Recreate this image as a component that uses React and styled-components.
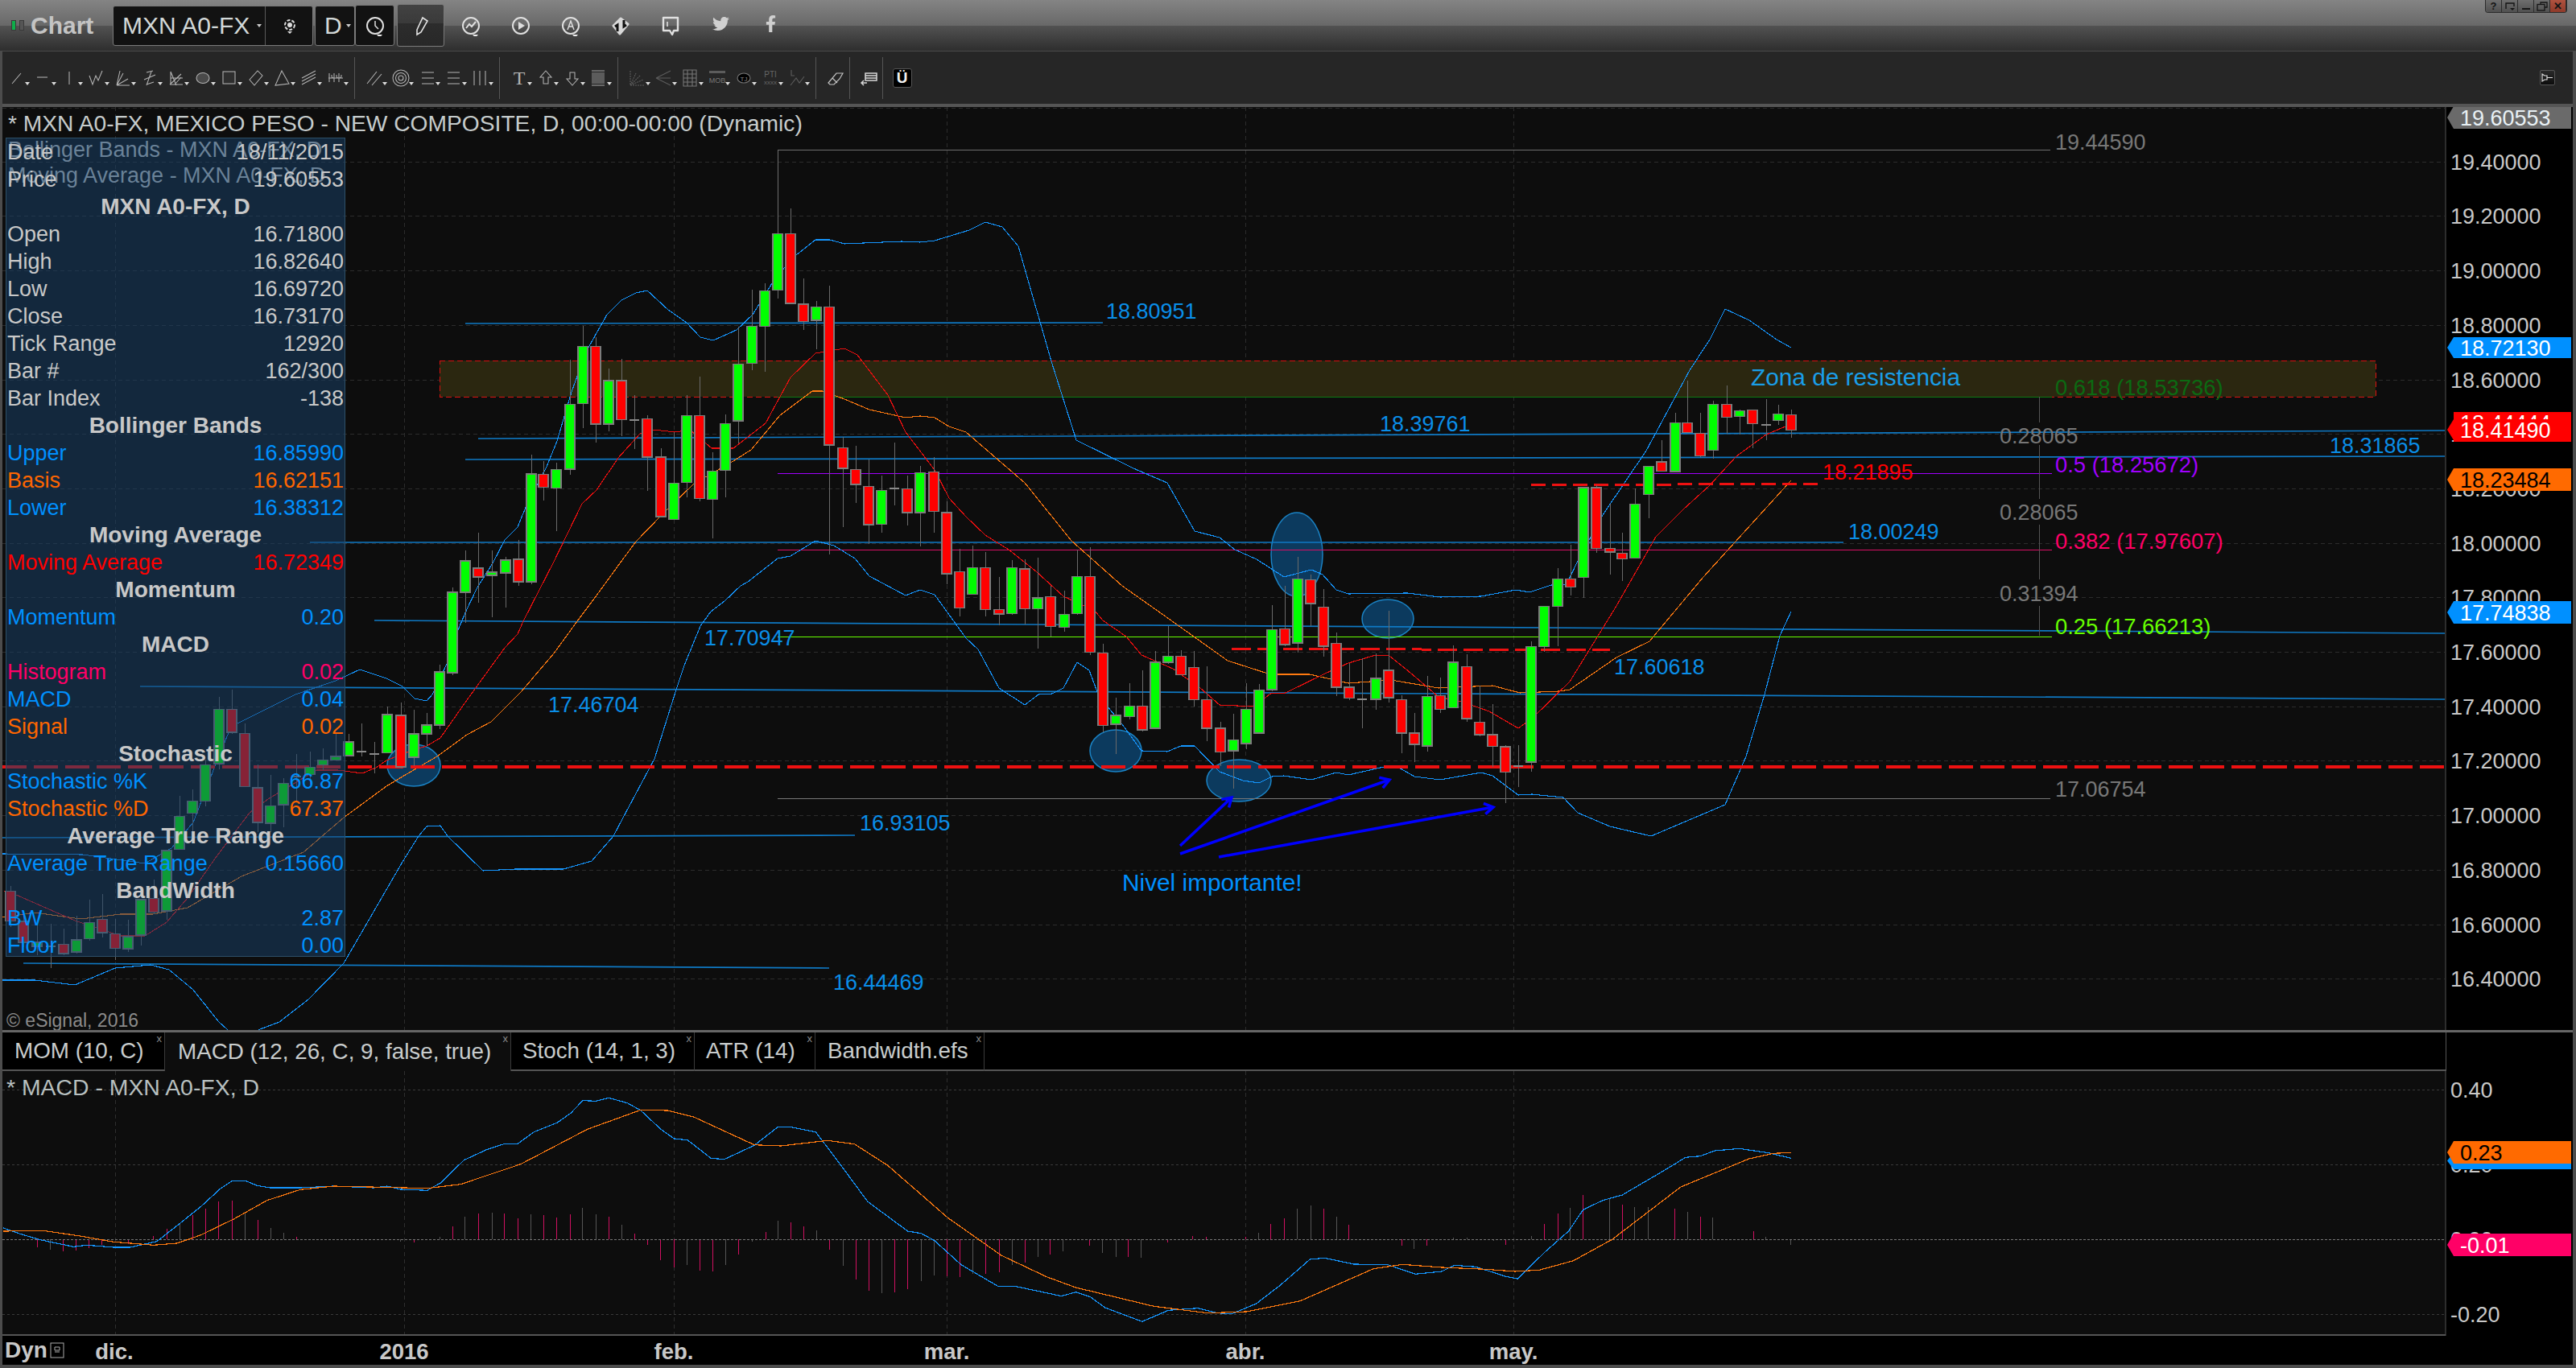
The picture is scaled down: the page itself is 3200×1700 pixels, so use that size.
import React from "react";
import styled, { createGlobalStyle } from "styled-components";
import { FaTwitter, FaFacebookF } from "react-icons/fa";

const FONT = `"Liberation Sans", Arial, sans-serif`;

const Global = createGlobalStyle`
  html, body { margin: 0; padding: 0; background: #000; }
  body { font-family: ${FONT}; }
`;

const Win = styled.div`
  width: 3200px;
  height: 1700px;
  overflow: hidden;
  display: flex;
  flex-direction: column;
  background: #4c4c4c;
  color: #c8c8c8;
`;

/* ---------- title bar ---------- */
const TitleBar = styled.div`
  height: 63px;
  flex: none;
  display: flex;
  align-items: center;
  position: relative;
  border-bottom: 1px solid #4a4a4a;
  background: linear-gradient(#848484 0, #686868 32px, #525252 32px, #2e2e2e 63px);
`;
const Led = styled.span`
  width: 6px;
  height: 13px;
  margin-left: ${(p) => p.$ml}px;
  background: ${(p) => p.$c};
  border: 1px solid #3a3a3a;
  box-sizing: border-box;
`;
const AppName = styled.span`
  margin-left: 8px;
  width: 102px;
  font-size: 30px;
  font-weight: bold;
  color: #c4c4c4;
`;
const FieldBox = styled.div`
  height: ${(p) => p.$h || 50}px;
  width: ${(p) => p.$w}px;
  margin-left: ${(p) => p.$ml || 0}px;
  box-sizing: border-box;
  display: flex;
  align-items: center;
  background: ${(p) => p.$bg || "#121212"};
  border: 1px solid #7a7a7a;
  border-radius: 3px;
  flex: none;
  position: relative;
`;
const FieldText = styled.span`
  font-size: 30px;
  color: #d2d8d8;
  margin-left: ${(p) => p.$ml}px;
`;
const TinyCaret = styled.span`
  position: absolute;
  left: ${(p) => p.$x}px;
  top: 22px;
  border-left: 3px solid transparent;
  border-right: 3px solid transparent;
  border-top: 4px solid #ccc;
`;
const FieldDivider = styled.span`
  position: absolute;
  left: 188px;
  top: 0;
  bottom: 0;
  border-left: 1px solid #5a5a5a;
`;
const FieldIcon = styled.span`
  position: absolute;
  left: ${(p) => p.$x}px;
  top: 50%;
  transform: translate(-50%, -50%);
  display: flex;
`;
const TitleIcons = styled.div`
  display: flex;
  margin-left: 2px;
`;
const TitleIconCell = styled.div`
  width: 62px;
  display: flex;
  justify-content: center;
  color: #d0d0d0;
  font-size: 21px;
`;
const WinButtons = styled.div`
  position: absolute;
  left: 3087px;
  top: 0;
  display: flex;
  height: 15px;
  border: 1px solid #2c2c2c;
  border-top: none;
  border-radius: 0 0 4px 4px;
  overflow: hidden;
`;
const WinBtn = styled.div`
  width: 20px;
  box-sizing: border-box;
  border-right: 1px solid #2c2c2c;
  background: ${(p) =>
    p.$close ? "linear-gradient(#b0523f,#8f3a2a)" : "linear-gradient(#6e6e6e,#505050)"};
  display: flex;
  align-items: center;
  justify-content: center;
  color: #151515;
  font-size: 13px;
  font-weight: bold;
  line-height: 1;
`;

/* ---------- body + drawing toolbar ---------- */
const Frame = styled.div`
  flex: 1;
  display: flex;
  flex-direction: column;
  padding: 0 4px 4px 3px;
  min-height: 0;
`;
const DrawBar = styled.div`
  height: 65px;
  flex: none;
  display: flex;
  align-items: center;
  background: #262626;
  overflow: hidden;
`;
const ToolGroup = styled.div`
  height: 52px;
  display: flex;
  align-items: center;
  padding: 0 ${(p) => (p.$tight ? 0 : 6.5)}px 0 7.5px;
  border-right: ${(p) => (p.$plain ? "none" : "1px solid #555")};
  &:first-child {
    margin-left: -6px;
  }
`;
const ToolCell = styled.div`
  width: 33px;
  height: 30px;
  position: relative;
  display: flex;
  align-items: center;
  justify-content: center;
  svg {
    display: block;
  }
`;
const Caret = styled.span`
  position: absolute;
  left: 26px;
  bottom: 6px;
  border-left: 3px solid transparent;
  border-right: 3px solid transparent;
  border-top: 4px solid #ddd;
`;
const MagnetBtn = styled.div`
  width: 24px;
  height: 24px;
  margin-left: 4px;
  background: #000;
  border: 1px solid #555;
  border-radius: 3px;
  box-sizing: border-box;
  display: flex;
  align-items: center;
  justify-content: center;
  color: #f0f0f0;
  font-weight: bold;
  font-size: 19px;
`;
const PinBtn = styled.div`
  width: 19px;
  height: 19px;
  margin-left: auto;
  margin-right: 22px;
  box-sizing: border-box;
  background: linear-gradient(#2a2a2a, #0c0c0c);
  border: 1px solid #555;
  border-radius: 2px;
  display: flex;
  align-items: center;
  justify-content: center;
`;
const Rule = styled.div`
  height: 4px;
  flex: none;
  background: #555;
`;

/* ---------- main chart ---------- */
const ChartArea = styled.div`
  position: relative;
  height: 1147px;
  flex: none;
  svg {
    display: block;
  }
  svg text {
    font-family: ${FONT};
  }
`;
const ChartTitle = styled.div`
  position: absolute;
  left: 7px;
  top: 4px;
  font-size: 28.2px;
  line-height: 32px;
  color: #c6cccc;
  white-space: nowrap;
`;
const DataPanel = styled.div`
  position: absolute;
  left: 4px;
  top: 38px;
  width: 422px;
  height: 1018px;
  box-sizing: border-box;
  border: 1px solid #2e5068;
  background: rgba(25, 64, 104, 0.525);
`;
const Legend = styled.div`
  position: absolute;
  left: 2px;
  top: ${(p) => p.$top}px;
  font-size: 27px;
  line-height: 28px;
  color: #6a8298;
  white-space: nowrap;
`;
const Row = styled.div`
  position: relative;
  height: 34px;
  padding: 0 1px 0 1px;
  display: flex;
  justify-content: ${(p) => (p.$head ? "center" : "space-between")};
  align-items: center;
  font-size: ${(p) => (p.$head ? 28 : 27)}px;
  font-weight: ${(p) => (p.$head ? "bold" : "normal")};
  color: ${(p) => p.$c || "#c8c8c8"};
  white-space: nowrap;
`;

/* ---------- tabs ---------- */
const TabStrip = styled.div`
  height: 48px;
  flex: none;
  display: flex;
  border-top: 3px solid #666;
  background: #000;
`;
const Tab = styled.div`
  width: ${(p) => p.$w}px;
  box-sizing: border-box;
  flex: none;
  position: relative;
  padding-left: ${(p) => p.$pl}px;
  display: flex;
  align-items: center;
  font-size: 27.8px;
  color: #c8cccc;
  white-space: nowrap;
  background: ${(p) => (p.$active ? "#0d0d0d" : "#000")};
  border-bottom: ${(p) => (p.$active ? "none" : "2px solid #555")};
  border-right: 1px solid #3a3a3a;
`;
const TabClose = styled.span`
  position: absolute;
  right: 3px;
  top: 1px;
  font-size: 13px;
  line-height: 14px;
  color: #888;
`;
const TabFill = styled.div`
  flex: 1;
  border-bottom: 2px solid #555;
`;
const TabAxis = styled.div`
  width: 157px;
  flex: none;
  border-left: 1px solid #555;
`;

/* ---------- bottom panes ---------- */
const MacdPane = styled.div`
  height: 329px;
  flex: none;
  svg {
    display: block;
  }
  svg text {
    font-family: ${FONT};
  }
`;
const TimeAxis = styled.div`
  height: 36px;
  flex: none;
  position: relative;
  background: #000;
`;
const TimeLabel = styled.span`
  position: absolute;
  left: ${(p) => p.$x - 3}px;
  top: 0;
  line-height: 40px;
  transform: translateX(-50%);
  font-size: 27.5px;
  font-weight: bold;
  color: #c8c8c8;
`;
const DynLabel = styled.div`
  display: flex;
  align-items: center;
  height: 100%;
  gap: 3px;
  padding-left: 3px;
  font-size: 28px;
  font-weight: bold;
  color: #c8c8c8;
`;

/* ---------- chart data, all in page pixels ---------- */
const place = (rows, y0, k) =>
  rows.map(([x, c, a, b, e, d]) => [x, c, y0 + a / k, y0 + b / k, y0 + e / k, y0 + d / k]);

const BARS = [
  ...place(
    [
      [13, "r", 1155, 1170, 1260, 1280], [29, "r", 1240, 1262, 1325, 1340], [46, "g", 1270, 1325, 1338, 1365],
      [63, "d", 1270, 1338, 1338, 1405], [79, "r", 1285, 1332, 1360, 1365], [95, "g", 1245, 1318, 1355, 1360],
      [111, "g", 1195, 1266, 1314, 1320], [127, "r", 1178, 1256, 1296, 1310], [143, "r", 1255, 1300, 1344, 1380],
      [159, "g", 1258, 1308, 1345, 1355], [175, "g", 1195, 1195, 1304, 1335], [191, "r", 1135, 1192, 1233, 1240],
      [207, "g", 1046, 1046, 1230, 1256], [223, "g", 880, 942, 1042, 1042], [239, "g", 860, 896, 932, 990],
      [255, "g", 770, 785, 895, 912], [272, "g", 578, 616, 782, 798], [288, "r", 556, 616, 686, 690],
      [304, "r", 660, 690, 851, 851], [320, "r", 783, 855, 960, 990], [336, "g", 815, 910, 963, 990],
      [352, "g", 825, 842, 907, 975], [368, "d", 752, 820, 820, 895], [385, "g", 745, 793, 815, 845],
      [401, "g", 735, 770, 785, 800], [417, "g", 690, 760, 770, 770], [433, "g", 690, 715, 757, 760],
      [449, "d", 660, 745, 745, 760], [465, "d", 715, 752, 752, 810], [481, "g", 608, 632, 748, 748],
    ],
    630,
    2.45
  ),
  [498, "r", 873, 889, 953, 955], [514, "g", 882, 912, 941, 952], [530, "g", 886, 901, 912, 927],
  [546, "g", 826, 835, 901, 906], [562, "g", 730, 736, 836, 839], [578, "g", 684, 697, 736, 774],
  [594, "r", 662, 706, 717, 749], [611, "g", 684, 711, 715, 767], [628, "g", 692, 696, 712, 755],
  [644, "r", 671, 695, 723, 728], [660, "g", 565, 589, 723, 726],
  ...place(
    [
      [675, "r", 1100, 1146, 1191, 1237], [691, "g", 1105, 1130, 1194, 1345], [708, "g", 748, 903, 1129, 1147],
      [724, "g", 630, 701, 900, 985], [740, "r", 670, 701, 972, 1037], [756, "g", 778, 821, 972, 997],
      [772, "r", 745, 821, 956, 1013], [788, "d", 870, 957, 957, 1057], [804, "r", 940, 953, 1087, 1203],
      [821, "r", 1055, 1087, 1294, 1295], [837, "g", 1000, 1178, 1303, 1304], [853, "g", 870, 942, 1174, 1225],
      [869, "r", 805, 942, 1230, 1240], [885, "g", 1070, 1135, 1233, 1368], [901, "g", 938, 970, 1132, 1225],
      [917, "g", 632, 763, 961, 1040], [934, "g", 503, 631, 760, 785], [950, "g", 482, 508, 631, 790],
      [966, "g", 310, 310, 505, 535], [982, "r", 220, 310, 552, 552], [998, "r", 465, 555, 614, 643],
      [1014, "g", 543, 564, 611, 710], [1030, "r", 490, 564, 1045, 1424], [1047, "r", 1015, 1054, 1126, 1330],
      [1063, "r", 1047, 1130, 1182, 1245], [1079, "r", 1095, 1188, 1322, 1390], [1095, "g", 1150, 1202, 1320, 1350],
      [1111, "d", 1037, 1195, 1195, 1253], [1127, "r", 1150, 1197, 1280, 1323], [1143, "g", 1118, 1141, 1280, 1398],
      [1160, "r", 1087, 1138, 1275, 1350], [1176, "r", 1240, 1279, 1493, 1530], [1192, "r", 1405, 1486, 1612, 1640],
    ],
    180,
    2.8
  ),
  ...place(
    [
      [1208, "g", 225, 306, 402, 402], [1224, "r", 250, 306, 457, 480], [1241, "r", 340, 457, 473, 512],
      [1257, "g", 277, 306, 471, 475], [1273, "r", 275, 310, 454, 510], [1289, "g", 270, 414, 454, 597],
      [1305, "r", 370, 410, 518, 555], [1322, "g", 390, 474, 521, 537], [1338, "g", 240, 338, 471, 475],
      [1354, "r", 232, 338, 611, 622], [1370, "r", 581, 614, 875, 900], [1386, "g", 775, 838, 870, 978],
      [1403, "g", 723, 805, 843, 852], [1419, "r", 677, 805, 890, 895], [1435, "g", 607, 646, 885, 885],
      [1451, "g", 517, 625, 647, 652], [1467, "r", 602, 625, 692, 692], [1483, "r", 607, 666, 782, 805],
      [1499, "r", 662, 782, 885, 930], [1516, "r", 862, 884, 970, 1020], [1532, "g", 833, 927, 965, 1103],
      [1548, "g", 723, 817, 940, 960], [1564, "g", 725, 747, 902, 905], [1580, "g", 441, 529, 745, 750],
      [1596, "r", 370, 526, 583, 590], [1612, "g", 267, 347, 577, 612], [1628, "r", 330, 350, 435, 515],
      [1644, "r", 383, 448, 588, 625], [1660, "r", 540, 579, 737, 768], [1676, "r", 650, 737, 776, 783],
      [1692, "d", 632, 780, 780, 885], [1709, "g", 615, 704, 780, 818], [1725, "r", 460, 675, 774, 792],
      [1741, "r", 765, 782, 902, 975], [1757, "r", 830, 902, 942, 1005], [1773, "g", 695, 770, 948, 970],
      [1789, "r", 703, 767, 817, 828], [1805, "g", 587, 646, 811, 811], [1822, "r", 618, 663, 850, 862],
      [1838, "r", 730, 863, 907, 913], [1854, "r", 798, 907, 950, 1025], [1870, "r", 945, 951, 1043, 1153],
      [1886, "d", 945, 1022, 1022, 1095], [1902, "g", 572, 590, 1006, 1040],
    ],
    600,
    2.9
  ),
  ...place(
    [
      [1918, "g", 1000, 1000, 1150, 1170], [1935, "g", 858, 898, 1000, 1150], [1951, "r", 770, 898, 928, 960],
      [1967, "g", 600, 558, 892, 970], [1983, "r", 550, 558, 785, 800], [2000, "r", 618, 785, 798, 882],
      [2015, "r", 725, 802, 823, 905], [2031, "g", 560, 619, 820, 820], [2048, "g", 478, 478, 583, 673],
      [2064, "r", 380, 462, 497, 497], [2081, "g", 278, 316, 498, 498], [2096, "r", 160, 316, 352, 352],
      [2112, "r", 280, 355, 440, 445], [2128, "g", 235, 247, 418, 450], [2145, "r", 178, 247, 295, 358],
      [2161, "g", 268, 272, 293, 360], [2177, "r", 268, 268, 320, 410], [2194, "d", 228, 323, 323, 380],
      [2209, "g", 250, 283, 307, 325], [2225, "r", 268, 286, 343, 372],
    ],
    420,
    3
  ),
];

const UPPER = [
  [3, 1061], [103, 1062], [180, 1073], [213, 1054], [240, 1022], [267, 952], [287, 903], [303, 895], [367, 863],
  [417, 846], [447, 832], [480, 843], [500, 853], [515, 868], [530, 871], [537, 863], [555, 825], [568, 785],
  [580, 757], [593, 730], [612, 700], [627, 671], [643, 655], [654, 628], [679, 580], [692, 548], [710, 487],
  [728, 437], [754, 391], [772, 373], [790, 364], [804, 361], [830, 385], [853, 401], [870, 419], [886, 423],
  [915, 410], [935, 391], [964, 344], [989, 317], [1013, 298], [1031, 298], [1049, 303], [1120, 300], [1143, 301],
  [1161, 299], [1204, 286], [1224, 276], [1245, 282], [1265, 306], [1306, 449], [1337, 547], [1408, 582], [1450, 600],
  [1484, 660], [1515, 668], [1534, 683], [1561, 695], [1595, 717], [1629, 708], [1643, 714], [1660, 733], [1675, 738],
  [1748, 737], [1789, 742], [1840, 741], [1883, 733], [1900, 736], [1927, 727], [1946, 726], [1960, 697], [1991, 640],
  [2045, 560], [2099, 460], [2124, 422], [2143, 384], [2173, 398], [2207, 422], [2225, 432],
];
const LOWER = [
  [3, 1218], [43, 1218], [93, 1224], [143, 1203], [187, 1199], [210, 1205], [240, 1230], [272, 1270], [300, 1295],
  [323, 1279], [347, 1270], [383, 1242], [427, 1197], [467, 1128], [500, 1071], [520, 1039], [530, 1027], [547, 1026],
  [556, 1039], [600, 1082], [640, 1080], [700, 1080], [735, 1070], [762, 1039], [773, 1018], [813, 943], [840, 857],
  [850, 827], [870, 778], [883, 760], [900, 747], [920, 728], [929, 723], [966, 694], [982, 691], [1013, 672],
  [1036, 678], [1062, 694], [1080, 716], [1125, 740], [1143, 733], [1161, 739], [1200, 793], [1215, 807], [1241, 855],
  [1273, 876], [1290, 863], [1307, 862], [1321, 855], [1338, 823], [1353, 833], [1365, 865], [1394, 900], [1418, 933],
  [1450, 934], [1467, 927], [1484, 927], [1515, 959], [1544, 970], [1564, 973], [1580, 965], [1595, 964], [1629, 969],
  [1660, 960], [1675, 963], [1719, 953], [1738, 954], [1757, 965], [1789, 969], [1840, 960], [1854, 964], [1886, 988],
  [1903, 987], [1942, 991], [1960, 1010], [2000, 1027], [2051, 1039], [2143, 1000], [2169, 940], [2192, 863], [2211, 790],
  [2225, 760],
];
const MA = [
  [5, 1107], [20, 1112], [93, 1144], [150, 1163], [180, 1163], [207, 1146], [233, 1116], [267, 1067], [310, 1010],
  [333, 993], [393, 957], [420, 957], [450, 961], [467, 954], [480, 945], [513, 932], [530, 927], [547, 917], [580, 870],
  [627, 805], [643, 788], [650, 772], [687, 700], [723, 626], [741, 609], [768, 569], [795, 539], [812, 534], [839, 537],
  [857, 534], [884, 557], [911, 557], [951, 526], [982, 469], [1013, 439], [1049, 433], [1065, 441], [1103, 491],
  [1125, 537], [1161, 584], [1179, 619], [1200, 642], [1224, 665], [1253, 683], [1287, 710], [1321, 741], [1360, 759],
  [1370, 771], [1399, 791], [1418, 814], [1457, 831], [1491, 855], [1515, 876], [1559, 878], [1578, 862], [1597, 861],
  [1646, 837], [1675, 824], [1709, 814], [1726, 815], [1752, 836], [1787, 866], [1816, 872], [1850, 884], [1886, 905],
  [1903, 893], [1950, 847], [2008, 753], [2057, 667], [2091, 633], [2124, 603], [2157, 567], [2194, 540], [2225, 527],
];
const BASIS = [
  [3, 1140], [43, 1134], [100, 1142], [150, 1136], [190, 1136], [233, 1128], [300, 1089], [377, 1059], [427, 1016],
  [480, 977], [500, 965], [543, 940], [580, 913], [610, 897], [647, 860], [688, 812], [717, 772], [741, 740], [770, 700],
  [790, 673], [821, 641], [862, 601], [906, 576], [933, 559], [969, 516], [1009, 486], [1022, 486], [1049, 496],
  [1080, 509], [1125, 519], [1143, 517], [1161, 519], [1179, 530], [1200, 537], [1273, 600], [1331, 672], [1394, 728],
  [1452, 769], [1525, 821], [1578, 838], [1627, 838], [1675, 849], [1728, 845], [1787, 855], [1854, 852], [1888, 861],
  [1937, 859], [1950, 857], [2008, 817], [2049, 797], [2116, 717], [2165, 663], [2225, 597],
];

const zoomed = (rows, x0, kx, y0, ky) => rows.map(([x, y]) => [x0 + x / kx, y0 + y / ky]);
const MACD_LINE = [
  ...zoomed(
    [
      [5, 858], [30, 880], [60, 902], [110, 928], [130, 922], [170, 930], [195, 930], [235, 908], [270, 840], [300, 780],
      [330, 712], [348, 682], [368, 682], [385, 700], [405, 708], [450, 708], [500, 702], [560, 708], [580, 702], [600, 714],
      [640, 718], [660, 690], [695, 605], [730, 565], [755, 545], [775, 545], [800, 500], [835, 465], [855, 430], [873, 383],
      [893, 385], [912, 373], [940, 392], [960, 420], [990, 490], [1010, 525], [1030, 530], [1065, 598], [1085, 602],
      [1130, 550], [1165, 482], [1185, 482], [1222, 500], [1260, 625], [1300, 760], [1360, 870], [1380, 878], [1400, 905],
      [1440, 995], [1495, 1075], [1520, 1075], [1568, 1100],
    ],
    0, 1.206, 1240, 3
  ),
  ...zoomed(
    [
      [15, 1112], [30, 1097], [45, 1115], [60, 1155], [98, 1207], [125, 1165], [155, 1157], [175, 1175], [190, 1178],
      [215, 1140], [240, 1070], [270, 975], [285, 970], [315, 993], [350, 995], [378, 1030], [405, 1020], [418, 997],
      [440, 1003], [470, 1038], [483, 1048], [510, 950], [535, 870], [550, 790], [570, 755], [590, 735], [630, 650],
      [655, 595], [670, 590], [685, 570], [710, 562], [740, 578], [763, 598],
    ],
    1300, 0.825, 1240, 3
  ),
];
const MACD_SIGNAL = [
  ...zoomed(
    [
      [5, 870], [65, 868], [120, 888], [170, 910], [230, 922], [265, 915], [300, 885], [350, 825], [400, 755], [450, 715],
      [500, 702], [570, 706], [640, 710], [690, 695], [780, 620], [880, 490], [960, 418], [1000, 420], [1040, 445],
      [1130, 548], [1170, 552], [1240, 532], [1280, 545], [1330, 625], [1420, 820], [1500, 960], [1568, 1040],
    ],
    0, 1.206, 1240, 3
  ),
  ...zoomed(
    [
      [30, 1080], [110, 1150], [165, 1175], [205, 1170], [260, 1130], [335, 1010], [365, 994], [405, 1005], [450, 1012],
      [480, 1020], [505, 1015], [540, 980], [580, 900], [650, 705], [720, 600], [745, 580], [763, 577],
    ],
    1300, 0.825, 1240, 3
  ),
];
// [x, bar end], "g" marks the bars that were painted grey
const HIST = [
  ...[
    [56, 930], [75, 938, "g"], [95, 945], [114, 942], [133, 932], [152, 922], [192, 918], [230, 888], [250, 860],
    [270, 840, "g"], [289, 810], [308, 785], [328, 758], [348, 755], [367, 800, "g"], [387, 827], [406, 858, "g"],
    [425, 876, "g"], [445, 892], [600, 910, "g"], [620, 912], [659, 890, "g"], [678, 852], [697, 815, "g"], [717, 803],
    [737, 800, "g"], [756, 803], [776, 822], [795, 807, "g"], [815, 810], [834, 818], [854, 807], [873, 783, "g"],
    [893, 807, "g"], [912, 815], [932, 845, "g"], [951, 878], [970, 920], [990, 978], [1010, 1004], [1029, 995, "g"],
    [1049, 1017], [1068, 1020], [1087, 995, "g"], [1107, 957], [1127, 910, "g"], [1147, 873], [1165, 830, "g"], [1185, 837],
    [1204, 852], [1223, 866, "g"], [1243, 938], [1263, 998, "g"], [1283, 1050], [1302, 1092], [1321, 1100, "g"], [1341, 1097],
    [1360, 1085], [1380, 1055, "g"], [1399, 1035, "g"], [1419, 1038], [1438, 1042], [1458, 1030, "g"], [1477, 1030],
    [1497, 1022], [1516, 995, "g"], [1536, 987], [1555, 965, "g"],
  ].map(([x, y, g]) => [x / 1.206, y, g]),
  ...[
    [4, 958], [17, 945, "g"], [44, 923], [57, 950, "g"], [71, 965, "g"], [84, 965], [97, 968, "g"], [124, 912], [150, 888],
    [164, 892], [204, 892], [217, 877, "g"], [230, 843], [244, 822], [257, 786, "g"], [271, 773, "g"], [284, 786],
    [297, 815, "g"], [310, 846], [364, 923], [377, 935, "g"], [390, 923], [417, 893, "g"], [431, 895, "g"], [458, 907, "g"],
    [471, 920], [497, 887, "g"], [510, 843], [524, 805], [537, 783, "g"], [550, 735], [577, 750, "g"], [590, 770],
    [603, 780, "g"], [617, 780, "g"], [644, 785], [657, 798, "g"], [670, 816], [683, 818, "g"], [725, 870], [737, 892, "g"],
    [763, 920, "g"],
  ].map(([x, y, g]) => [1300 + x / 0.825, y, g]),
];

const PANEL = [
  ["Date", "18/11/2015"],
  ["Price", "19.60553"],
  ["MXN A0-FX, D"],
  ["Open", "16.71800"],
  ["High", "16.82640"],
  ["Low", "16.69720"],
  ["Close", "16.73170"],
  ["Tick Range", "12920"],
  ["Bar #", "162/300"],
  ["Bar Index", "-138"],
  ["Bollinger Bands"],
  ["Upper", "16.85990", "#0090ff"],
  ["Basis", "16.62151", "#ff6600"],
  ["Lower", "16.38312", "#0090ff"],
  ["Moving Average"],
  ["Moving Average", "16.72349", "#ff0000"],
  ["Momentum"],
  ["Momentum", "0.20", "#0090ff"],
  ["MACD"],
  ["Histogram", "0.02", "#ff0066"],
  ["MACD", "0.04", "#0090ff"],
  ["Signal", "0.02", "#ff6600"],
  ["Stochastic"],
  ["Stochastic %K", "66.87", "#0090ff"],
  ["Stochastic %D", "67.37", "#ff6600"],
  ["Average True Range"],
  ["Average True Range", "0.15660", "#0090ff"],
  ["BandWidth"],
  ["BW", "2.87", "#0090ff"],
  ["Floor", "0.00", "#0090ff"],
];

const MONTHS = [
  ["dic.", 142],
  ["2016", 502],
  ["feb.", 837],
  ["mar.", 1176],
  ["abr.", 1547],
  ["may.", 1880],
];

const TRENDS = [
  [578, 402, 1370, 401],
  [594, 545, 3037, 535],
  [578, 571, 3037, 567],
  [385, 674, 2290, 674],
  [465, 771, 3037, 787],
  [174, 853, 3037, 869],
  [3, 1041, 1062, 1038],
  [29, 1197, 1030, 1203],
];

const CHART_LABELS = [
  ["19.44590", 2553, 176, "#777"],
  ["18.80951", 1374, 386, "#0a8ee8"],
  ["Zona de resistencia", 2175, 469, "#1a9ee8", 29.8],
  ["18.39761", 1714, 526, "#0a8ee8"],
  ["18.31865", 2894, 553, "#0a8ee8"],
  ["18.21895", 2264, 586, "#ff0000"],
  ["18.00249", 2296, 660, "#0a8ee8"],
  ["17.70947", 875, 792, "#0a8ee8"],
  ["17.60618", 2005, 828, "#0a8ee8"],
  ["17.46704", 681, 875, "#0a8ee8"],
  ["17.06754", 2553, 980, "#777"],
  ["16.93105", 1068, 1022, "#0a8ee8"],
  ["Nivel importante!", 1394, 1097, "#0090ff", 29.8],
  ["16.44469", 1035, 1220, "#0a8ee8"],
  ["© eSignal, 2016", 8, 1266, "#8a8a8a", 23],
  ["0.618 (18.53736)", 2553, 481, "#0b6a12", 27.4],
  ["0.5 (18.25672)", 2553, 577, "#a000ff", 27.4],
  ["0.382 (17.97607)", 2553, 672, "#ff0066", 27.4],
  ["0.25 (17.66213)", 2553, 778, "#66ff00", 27.4],
  ["0.28065", 2484, 541, "#777"],
  ["0.28065", 2484, 636, "#777"],
  ["0.31394", 2484, 737, "#777"],
];

const FIB_LINES = [
  [966, 186, 2547, 186, "#6e6e6e"],
  [966, 186, 966, 290, "#6e6e6e"],
  [966, 992, 2547, 992, "#777"],
  [966, 493, 2549, 493, "#0b7a12"],
  [966, 588, 2549, 588, "#a000ff"],
  [966, 683, 2549, 683, "#d80f64"],
  [966, 791, 2549, 791, "#66ff00"],
  [2533, 493, 2533, 525, "#555"],
  [2533, 553, 2533, 620, "#555"],
  [2533, 652, 2533, 720, "#555"],
  [2533, 753, 2533, 790, "#555"],
];

const ELLIPSES = [
  [1611, 689, 32, 52],
  [1724, 769, 32, 24],
  [1386, 933, 32, 26],
  [1539, 970, 40, 26],
  [514, 951, 33, 26],
];

const ARROWS = [
  [1466, 1051, 1530, 991],
  [1466, 1061, 1726, 969],
  [1514, 1065, 1855, 1003],
];

const AXIS_MAIN = ["19.40000", "19.20000", "19.00000", "18.80000", "18.60000", "18.40000", "18.20000", "18.00000", "17.80000", "17.60000", "17.40000", "17.20000", "17.00000", "16.80000", "16.60000", "16.40000"];
const priceY = (p) => 472 + (18.6 - p) * 338.5;
const GRID_V = [143, 502, 837, 1176, 1547, 1880];

const pts = (a) => a.map(([x, y]) => `${x.toFixed(1)},${y.toFixed(1)}`).join(" ");

function Tag({ y1, y2, fill, label, color = "#fff", x = 3056, size = 27 }) {
  const mid = (y1 + y2) / 2;
  return (
    <g>
      <polygon points={`3040,${mid} 3048,${y1} 3194,${y1} 3194,${y2} 3048,${y2}`} fill={fill} />
      <text x={x} y={mid + 9.5} fontSize={size} fill={color}>
        {label}
      </text>
    </g>
  );
}

function Candle({ x, c, top, open, close, bottom }) {
  const fill = c === "g" ? "#00ff00" : "#ff0000";
  return (
    <g shapeRendering="crispEdges">
      <line x1={x} x2={x} y1={top} y2={bottom} stroke="#6a6a6a" strokeWidth="1" />
      {c === "d" ? (
        <rect x={x - 6} y={open - 1} width="12" height="2" fill="#8a8a8a" />
      ) : (
        <rect x={x - 6} y={open} width="12" height={Math.max(close - open, 2)} fill={fill} stroke="#7c7c7c" strokeWidth="1.5" />
      )}
    </g>
  );
}

function MainChart() {
  return (
    <svg width="3193" height="1147" viewBox="3 133 3193 1147">
      <rect x="3" y="133" width="3035" height="1147" fill="#0d0d0d" />
      <rect x="3038" y="133" width="158" height="1147" fill="#000" />
      <g stroke="#2c2c2c" strokeWidth="1" strokeDasharray="5 4" shapeRendering="crispEdges">
        <line x1="3" x2="3037" y1="134" y2="134" />
        {AXIS_MAIN.map((p) => (
          <line key={p} x1="3" x2="3037" y1={priceY(+p)} y2={priceY(+p)} />
        ))}
        {GRID_V.map((x) => (
          <line key={x} x1={x} x2={x} y1="133" y2="1280" />
        ))}
      </g>
      <line x1="3038" x2="3038" y1="133" y2="1280" stroke="#555" />

      <rect x="546" y="448" width="2405" height="45" fill="#2b2710" stroke="#d81010" strokeDasharray="7 4" strokeWidth="1" shapeRendering="crispEdges" />

      {ELLIPSES.map(([cx, cy, rx, ry]) => (
        <ellipse key={cx} cx={cx} cy={cy} rx={rx} ry={ry} fill="#0c3a5e" stroke="#1a82c4" strokeWidth="1.5" />
      ))}

      {TRENDS.map(([a, b, c, d]) => (
        <line key={a + "-" + b} x1={a} y1={b} x2={c} y2={d} stroke="#0f79c4" strokeWidth="1.7" />
      ))}
      {FIB_LINES.map(([a, b, c, d, s], i) => (
        <line key={i} x1={a} y1={b} x2={c} y2={d} stroke={s} strokeWidth="1" shapeRendering="crispEdges" />
      ))}

      <g fill="none" strokeWidth="1.1" shapeRendering="crispEdges">
        <polyline points={pts(BASIS)} stroke="#ff7a10" />
        <polyline points={pts(MA)} stroke="#ee0f0f" />
        <polyline points={pts(UPPER)} stroke="#1596ff" />
        <polyline points={pts(LOWER)} stroke="#1596ff" />
      </g>

      <g stroke="#ee1111" fill="none" shapeRendering="crispEdges">
        <line x1="3" x2="3038" y1="953" y2="953" strokeWidth="3.5" strokeDasharray="30 9" />
        <line x1="1902" x2="2258" y1="603" y2="601" strokeWidth="3" strokeDasharray="18 8" />
        <line x1="1530" x2="2000" y1="806" y2="808" strokeWidth="3" strokeDasharray="24 8" />
      </g>

      {BARS.map(([x, c, t, o, e, b]) => (
        <Candle key={x} x={x} c={c} top={t} open={o} close={e} bottom={b} />
      ))}

      {ARROWS.map(([a, b, c, d]) => {
        const ang = Math.atan2(d - b, c - a);
        const hx = (s) => c - 13 * Math.cos(ang + s * 0.55);
        const hy = (s) => d - 13 * Math.sin(ang + s * 0.55);
        return (
          <g key={c} stroke="#0000ff" strokeWidth="3.5" fill="none">
            <line x1={a} y1={b} x2={c} y2={d} />
            <polyline points={`${hx(1)},${hy(1)} ${c},${d} ${hx(-1)},${hy(-1)}`} />
          </g>
        );
      })}

      {CHART_LABELS.map(([t, x, y, c, size]) => (
        <text key={t + x + y} x={x} y={y + 9.5} fontSize={size || 27} fill={c}>
          {t}
        </text>
      ))}

      {AXIS_MAIN.map((p) => (
        <text key={p} x="3044" y={priceY(+p) + 9.5} fontSize="27" fill="#c8c8c8">
          {p}
        </text>
      ))}
      <Tag y1={132} y2={160} fill="#6a6a6a" label="19.60553" color="#e8f0f4" />
      <Tag y1={419} y2={445} fill="#0090ff" label="18.72130" />
      <rect x="3048" y="512" width="146" height="37" fill="#ff0000" />
      <text x="3056" y="535" fontSize="27" fill="#fff">18.44444</text>
      <Tag y1={521} y2={547} fill="#ff0000" label="18.41490" />
      <Tag y1={582} y2={610} fill="#ff6a00" label="18.23484" color="#000" />
      <Tag y1={747} y2={775} fill="#0090ff" label="17.74838" />
    </svg>
  );
}

function MacdChart() {
  const zero = 1540;
  const gy = (z) => 1240 + z / 3;
  return (
    <svg width="3193" height="329" viewBox="3 1331 3193 329">
      <rect x="3" y="1331" width="3035" height="329" fill="#0d0d0d" />
      <rect x="3038" y="1331" width="158" height="329" fill="#000" />
      <g stroke="#2e2e2e" strokeDasharray="5 4" shapeRendering="crispEdges">
        {GRID_V.map((x) => (
          <line key={x} x1={x} x2={x} y1="1331" y2="1660" />
        ))}
      </g>
      <g stroke="#3a3a3a" strokeDasharray="3 3" shapeRendering="crispEdges">
        {[1354, 1447, 1633].map((y) => (
          <line key={y} x1="3" x2="3037" y1={y} y2={y} />
        ))}
      </g>
      <g strokeWidth="1" shapeRendering="crispEdges">
        {HIST.map(([x, z, g]) => (
          <line key={x} x1={x} x2={x} y1={zero} y2={gy(z)} stroke={g ? "#555" : "#d01060"} />
        ))}
      </g>
      <line x1="3" x2="3037" y1={zero} y2={zero} stroke="#777" strokeDasharray="3 2" shapeRendering="crispEdges" />
      <g fill="none" strokeWidth="1.2" shapeRendering="crispEdges">
        <polyline points={pts(MACD_LINE)} stroke="#1596ff" />
        <polyline points={pts(MACD_SIGNAL)} stroke="#ff7a10" />
      </g>
      <line x1="3" x2="3038" y1="1659" y2="1659" stroke="#555" strokeWidth="2" />
      <line x1="3038" x2="3038" y1="1331" y2="1660" stroke="#555" />
      <text x="8" y="1361" fontSize="28.4" fill="#b8c0c0">* MACD - MXN A0-FX, D</text>
      {[["0.40", 1354], ["0.20", 1447], ["0.00", 1540], ["-0.20", 1633]].map(([t, y]) => (
        <text key={t} x="3044" y={y + 9.5} fontSize="27" fill="#c8c8c8">
          {t}
        </text>
      ))}
      <Tag y1={1432} y2={1453} fill="#0090ff" label="" />
      <Tag y1={1418} y2={1446} fill="#ff6a00" label="0.23" color="#000" />
      <Tag y1={1533} y2={1561} fill="#ff0066" label="-0.01" />
    </svg>
  );
}

/* ---------- toolbar glyphs ---------- */
const TOOLS_A = [
  "M6 19L17 6",
  "M4 11H17",
  "M11 4V20",
  "M3 9L7 20L11 9L14 15L19 3",
  "M4 21L8 3M4 21L12 6M4 21L18 13M4 21H20",
  "M8 5L16 3M5 14L19 8M8 21L14 4M8 20L17 17",
  "M5 4L12 21M5 4V20M4 20H20M4 20L18 7M5 12L20 12M10 20L18 11",
  "ell",
  "rect",
  "M4 14L14 3L20 9L10 21Z",
  "M11 3L20 19L3 21Z",
  "M3 12L20 3M3 16L20 7M3 20L20 11",
  "M3 12H21M4 6V17M10 6V17M16 6V17M7 8C7 11 7 12 10 12M13 8C13 11 13 12 16 12M19 8C19 11 19 12 16 12",
];
const TOOLS_B = [
  "M3 19L15 4M9 21L21 7",
  "rings",
  "M5 5H20M5 12H20M5 19H20",
  "M4 5H19M4 12H19M4 19H19",
  "M4 3V21M11 3V21M18 3V21",
];
const TOOLS_C = ["serifT", "M12 3L19 11H15V19H9V11H5Z", "M12 21L19 13H15V5H9V13H5Z", "band"];

function ToolGlyph({ d, dim }) {
  const s = dim ? "#636363" : "#b4b4b4";
  return (
    <svg width="24" height="24" viewBox="0 0 24 24" fill="none" stroke={s} strokeWidth="1.05">
      {d === "ell" && <ellipse cx="12" cy="12" rx="8" ry="6.5" fill="#4a4a4a" />}
      {d === "rect" && <rect x="4" y="4" width="15" height="15" fill="#2e2e2e" />}
      {d === "rings" && (
        <>
          <circle cx="12" cy="12" r="10" />
          <circle cx="12" cy="12" r="6.5" />
          <circle cx="12" cy="12" r="3" />
        </>
      )}
      {d === "serifT" && (
        <text x="12" y="20" textAnchor="middle" fontFamily='"Liberation Serif", serif' fontSize="24" fill={s} stroke="none">
          T
        </text>
      )}
      {d === "band" && (
        <>
          <path d="M3 3H19M3 21H19" stroke="#aaa" />
          <rect x="3" y="5" width="16" height="14" fill="#5c5c5c" stroke="none" />
        </>
      )}
      {!["ell", "rect", "rings", "serifT", "band"].includes(d) && <path d={d} />}
    </svg>
  );
}

const Tool = ({ d, dim }) => (
  <ToolCell>
    <ToolGlyph d={d} dim={dim} />
    <Caret />
  </ToolCell>
);

function DimTool({ kind }) {
  const s = "#5c5c5c";
  return (
    <ToolCell>
      <svg width="24" height="24" viewBox="0 0 24 24" fill="none" stroke={s} strokeWidth="1.1">
        {kind === "fan" && <path d="M3 3V21H21M3 21L15 9M3 21L10 6M3 21L19 14" strokeDasharray="2 1" />}
        {kind === "arrow" && <path d="M2 12L20 3M2 12H20M2 12L20 21" />}
        {kind === "grid" && <path d="M3 2H19V22H3ZM3 7H19M3 12H19M3 17H19M8 2V22M14 2V22" stroke="#777" />}
        {kind === "mob" && (
          <>
            <rect x="2" y="3" width="20" height="3" fill={s} stroke="none" />
            <text x="12" y="18" textAnchor="middle" fontFamily={FONT} fontSize="9" fill="#777" stroke="none">MOB</text>
          </>
        )}
        {kind === "tj" && (
          <>
            <ellipse cx="12" cy="12" rx="8" ry="6" fill="#000" stroke="#777" />
            <text x="12" y="15.5" textAnchor="middle" fontFamily={FONT} fontSize="8" fill="#888" stroke="none">TJ</text>
          </>
        )}
        {kind === "pti" && (
          <>
            <text x="12" y="11" textAnchor="middle" fontFamily={FONT} fontSize="10" fill="#666" stroke="none">PTI</text>
            <text x="12" y="20" textAnchor="middle" fontFamily={FONT} fontSize="8" fill="#666" stroke="none">xxxx</text>
          </>
        )}
        {kind === "zig" && <path d="M5 2V9H9M4 21L11 12L15 18L21 10" />}
      </svg>
      <Caret />
    </ToolCell>
  );
}

const RingIcon = ({ inner, caret }) => (
  <svg width="26" height="26" viewBox="0 0 26 26" fill="none" stroke="#e0e0e0" strokeWidth="2">
    <circle cx="13" cy="13" r="10" />
    {inner}
    {caret && <path d="M15 24L22 24L18.5 28Z" fill="#eee" stroke="none" />}
  </svg>
);

function App() {
  return (
    <Win>
      <Global />
      <TitleBar>
        <Led $c="#0fae4a" $ml={14} />
        <Led $c="#555" $ml={4} />
        <AppName>Chart</AppName>
        <FieldBox $w={249}>
          <FieldText $ml={11}>MXN A0-FX</FieldText>
          <TinyCaret $x={178} />
          <FieldDivider />
          <FieldIcon $x={219}>
            <svg width="22" height="22" viewBox="0 0 22 22" fill="none" stroke="#ddd" strokeWidth="2">
              <circle cx="11" cy="10" r="6" strokeDasharray="4 2" />
              <circle cx="11" cy="10" r="2" fill="#ddd" />
              <path d="M8 18H14L11 21Z" fill="#ddd" stroke="none" />
            </svg>
          </FieldIcon>
        </FieldBox>
        <FieldBox $w={50} $ml={2}>
          <FieldText $ml={11}>D</FieldText>
          <TinyCaret $x={38} />
        </FieldBox>
        <FieldBox $w={49} $h={51}>
          <FieldIcon $x={24}>
            <RingIcon inner={<path d="M13 7V13L17 17" strokeWidth="1.5" />} caret />
          </FieldIcon>
        </FieldBox>
        <FieldBox $w={59} $h={53} $ml={3} $bg="linear-gradient(#424242 0,#3a3a3a 23px,#2c2c2c 23px,#282828 100%)">
          <FieldIcon $x={29}>
            <svg width="22" height="28" viewBox="0 0 22 28" fill="none" stroke="#e4e4e4" strokeWidth="1.6">
              <path d="M6 19L13 4L19 8L11 22L6 25Z" />
            </svg>
          </FieldIcon>
        </FieldBox>
        <TitleIcons>
          <TitleIconCell>
            <RingIcon inner={<path d="M7 16L11 11L14 14L19 8" />} caret />
          </TitleIconCell>
          <TitleIconCell>
            <RingIcon inner={<path d="M10 8L18 13L10 18Z" fill="#ddd" stroke="none" />} />
          </TitleIconCell>
          <TitleIconCell>
            <RingIcon inner={<path d="M9 18L13 7L17 18M10 14H16" strokeWidth="1.4" />} caret />
          </TitleIconCell>
          <TitleIconCell>
            <svg width="26" height="26" viewBox="0 0 26 26">
              <path d="M4 13L13 4L22 11L12 23Z" fill="#d8d8d8" stroke="#d8d8d8" strokeWidth="3" strokeLinejoin="round" />
              <path d="M9 20V12L6 14M17 6V14L20 12" stroke="#111" strokeWidth="3" fill="none" />
            </svg>
          </TitleIconCell>
          <TitleIconCell>
            <svg width="26" height="26" viewBox="0 0 26 26" fill="none" stroke="#e0e0e0" strokeWidth="2.4">
              <path d="M4 3H22V19H17L15 24L12 19H4Z" strokeLinejoin="round" />
              <path d="M9 8V14" strokeWidth="1.6" />
            </svg>
          </TitleIconCell>
          <TitleIconCell>
            <FaTwitter />
          </TitleIconCell>
          <TitleIconCell>
            <FaFacebookF />
          </TitleIconCell>
        </TitleIcons>
        <WinButtons>
          <WinBtn>?</WinBtn>
          <WinBtn>
            <svg width="14" height="12" viewBox="0 0 14 12" fill="none" stroke="#151515" strokeWidth="1.4">
              <path d="M2 9V2H12V6" />
              <path d="M7 8H13L10 11Z" fill="#151515" stroke="none" />
            </svg>
          </WinBtn>
          <WinBtn>
            <svg width="12" height="10" viewBox="0 0 12 10" stroke="#151515" strokeWidth="2">
              <path d="M1 8H11" />
            </svg>
          </WinBtn>
          <WinBtn>
            <svg width="14" height="12" viewBox="0 0 14 12" fill="none" stroke="#151515" strokeWidth="1.3">
              <path d="M5 3V1H13V7H10" />
              <rect x="1" y="3.5" width="9" height="7.5" />
            </svg>
          </WinBtn>
          <WinBtn $close>✕</WinBtn>
        </WinButtons>
      </TitleBar>

      <Frame>
        <DrawBar>
          <ToolGroup>
            {TOOLS_A.map((d) => (
              <Tool key={d} d={d} />
            ))}
          </ToolGroup>
          <ToolGroup>
            {TOOLS_B.map((d, i) => (
              <Tool key={i} d={d} />
            ))}
          </ToolGroup>
          <ToolGroup>
            {TOOLS_C.map((d) => (
              <Tool key={d} d={d} />
            ))}
          </ToolGroup>
          <ToolGroup>
            {["fan", "arrow", "grid", "mob", "tj", "pti", "zig"].map((k) => (
              <DimTool key={k} kind={k} />
            ))}
          </ToolGroup>
          <ToolGroup $tight>
            <ToolCell>
              <svg width="24" height="24" viewBox="0 0 24 24" fill="none" stroke="#c4c4c4" strokeWidth="1.2">
                <path d="M3 18L13 6H21L17 13L10 20H5ZM8 12L14 18" />
              </svg>
            </ToolCell>
          </ToolGroup>
          <ToolGroup $tight>
            <ToolCell>
              <svg width="24" height="24" viewBox="0 0 24 24" fill="none" stroke="#d8d8d8" strokeWidth="1.5">
                <path d="M7 6H21V15H7ZM7 9H21M7 12H21" />
                <path d="M2 18H9M5 15L2 18L5 21" />
              </svg>
            </ToolCell>
          </ToolGroup>
          <ToolGroup $plain>
            <MagnetBtn>Ü</MagnetBtn>
          </ToolGroup>
          <PinBtn>
            <svg width="15" height="13" viewBox="0 0 15 13" fill="none" stroke="#ddd" strokeWidth="1.2">
              <path d="M1 2L4 4H7V9H4L1 11ZM7 6.5H14" />
            </svg>
          </PinBtn>
        </DrawBar>
        <Rule />

        <ChartArea>
          <MainChart />
          <ChartTitle>* MXN A0-FX, MEXICO PESO - NEW COMPOSITE, D, 00:00-00:00 (Dynamic)</ChartTitle>
          <DataPanel>
            <Legend $top={0}>Bollinger Bands - MXN A0-FX, D</Legend>
            <Legend $top={32}>Moving Average - MXN A0-FX, D</Legend>
            {PANEL.map(([a, b, c], i) =>
              b ? (
                <Row key={i} $c={c}>
                  <span>{a}</span>
                  <span>{b}</span>
                </Row>
              ) : (
                <Row key={i} $head>
                  {a}
                </Row>
              )
            )}
          </DataPanel>
        </ChartArea>

        <TabStrip>
          <Tab $w={202} $pl={15}>
            MOM (10, C)<TabClose>x</TabClose>
          </Tab>
          <Tab $w={430} $pl={16} $active>
            MACD (12, 26, C, 9, false, true)<TabClose>x</TabClose>
          </Tab>
          <Tab $w={228} $pl={14}>
            Stoch (14, 1, 3)<TabClose>x</TabClose>
          </Tab>
          <Tab $w={150} $pl={14}>
            ATR (14)<TabClose>x</TabClose>
          </Tab>
          <Tab $w={210} $pl={15}>
            Bandwidth.efs<TabClose>x</TabClose>
          </Tab>
          <TabFill />
          <TabAxis />
        </TabStrip>

        <MacdPane>
          <MacdChart />
        </MacdPane>

        <TimeAxis>
          <DynLabel>
            Dyn
            <svg width="18" height="20" viewBox="0 0 18 20" fill="none" stroke="#aaa">
              <rect x="1" y="1" width="16" height="18" />
              <path d="M6 6H12V10H6ZM6 12H12" />
            </svg>
          </DynLabel>
          {MONTHS.map(([t, x]) => (
            <TimeLabel key={t} $x={x}>
              {t}
            </TimeLabel>
          ))}
        </TimeAxis>
      </Frame>
    </Win>
  );
}

export default App;
